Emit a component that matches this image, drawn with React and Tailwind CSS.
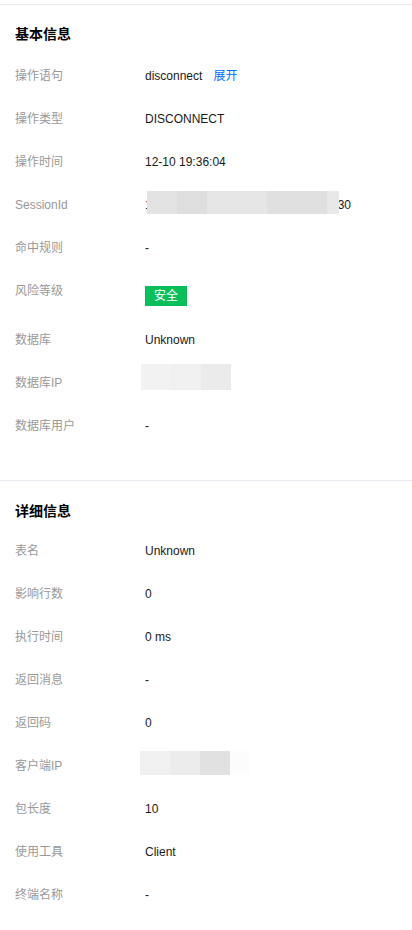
import React from 'react';

const font = { fontFamily: '"Liberation Sans", "Noto Sans CJK SC", sans-serif' };

function Blur({ blocks, className }) {
  // mosaic mask over sensitive values
  return (
    <div className={`absolute flex ${className}`}>
      {blocks.map(([w, c], i) => (
        <div key={i} className="h-full" style={{ width: w, background: c }} />
      ))}
    </div>
  );
}

function Row({ label, children, tall }) {
  return (
    <div className={`flex items-start mb-[25px] ${tall ? 'h-[24px]' : 'h-[18px]'}`}>
      <div className="w-[130px] shrink-0 text-[12px] leading-[18px] text-[#999]">{label}</div>
      <div className="relative flex-1 text-[12px] leading-[18px] text-[#1a1a1a]">{children}</div>
    </div>
  );
}

function Section({ title, children, className, gap }) {
  return (
    <div className={`border-t border-[#e5e8ee] px-[15px] ${className}`}>
      <div className={`text-[14px] leading-[20px] font-bold text-black ${gap}`}>{title}</div>
      {children}
    </div>
  );
}

export default function App() {
  return (
    <div className="w-[412px] min-h-[930px] bg-white pt-[4px]" style={font}>
      <Section title="基本信息" className="pt-[19px] pb-[20px]" gap="mb-[23px]">
        <Row label="操作语句">
          <span>disconnect</span>
          <span className="ml-[11px] text-[#006eff] cursor-pointer">展开</span>
        </Row>
        <Row label="操作类型">DISCONNECT</Row>
        <Row label="操作时间">12-10 19:36:04</Row>
        <Row label="SessionId">
          <span>1</span>
          <span className="inline-block w-[186px]" />
          <span>30</span>
          <Blur
            className="left-[2px] top-[-5px] h-[23px]"
            blocks={[[30, '#e3e3e3'], [30, '#dedede'], [60, '#e6e6e6'], [60, '#e0e0e0'], [12, '#e8e8e8']]}
          />
        </Row>
        <Row label="命中规则">-</Row>
        <Row label="风险等级" tall>
          <span className="inline-flex items-center justify-center mt-[4px] h-[20px] w-[42px] bg-[#0abf5b] text-white text-[12px]">安全</span>
        </Row>
        <Row label="数据库">Unknown</Row>
        <Row label="数据库IP">
          <span className="invisible">10.0.0.1</span>
          <Blur
            className="left-[-4px] top-[-10px] h-[26px]"
            blocks={[[30, '#f2f2f2'], [30, '#f0f0f0'], [30, '#ebebeb']]}
          />
        </Row>
        <Row label="数据库用户">-</Row>
      </Section>
      <Section title="详细信息" className="pt-[20px] pb-[10px]" gap="mb-[21px]">
        <Row label="表名">Unknown</Row>
        <Row label="影响行数">0</Row>
        <Row label="执行时间">0 ms</Row>
        <Row label="返回消息">-</Row>
        <Row label="返回码">0</Row>
        <Row label="客户端IP">
          <span className="invisible">10.0.0.1</span>
          <Blur
            className="left-[-5px] top-[-6px] h-[24px]"
            blocks={[[30, '#f0f0f0'], [30, '#ececec'], [30, '#e1e1e1'], [19, '#fcfcfc']]}
          />
        </Row>
        <Row label="包长度">10</Row>
        <Row label="使用工具">Client</Row>
        <Row label="终端名称">-</Row>
      </Section>
    </div>
  );
}
